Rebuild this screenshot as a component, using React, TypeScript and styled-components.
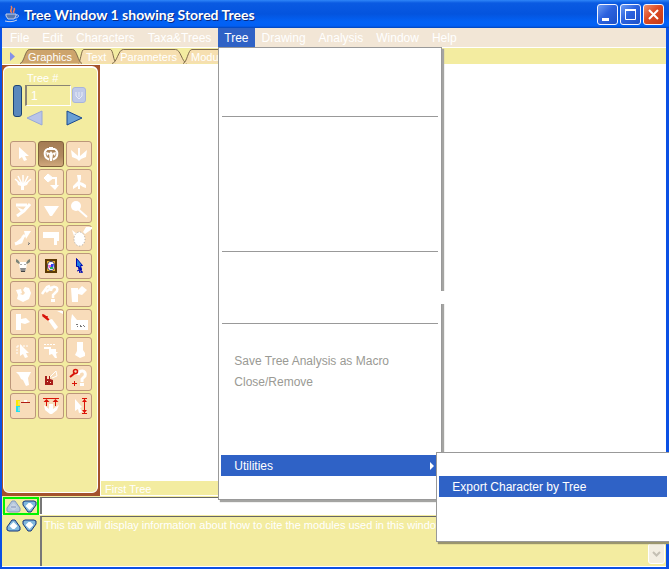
import React from "react";
import styled, { createGlobalStyle, css } from "styled-components";

const sand = "#f3eca0";
const select = "#2f62c6";

const Global = createGlobalStyle`
  * { box-sizing: border-box; }
  body { margin: 0; font: 12px/14px "Liberation Sans", Arial, sans-serif; overflow: hidden; }
  button, input { font: inherit; color: inherit; padding: 0; margin: 0; border: 0; background: none; border-radius: 0; }
  svg { display: block; }
`;

const Frame = styled.div`
  position: relative;
  display: flex;
  flex-direction: column;
  min-height: 100vh;
  overflow: hidden;
  background: #0a50e4;
  padding: 0 3px 2px 2px;
`;

const TitleBar = styled.header`
  display: flex;
  align-items: center;
  height: 28px;
  margin: 0 -3px 0 -2px;
  padding: 0 5px 0 4px;
  gap: 4px;
  background: linear-gradient(#2f86f8 0, #0a5ae2 3px, #0454de 14px, #0262f6 22px, #0260f4 26px, #0444b8 28px);
`;

const Title = styled.h1`
  flex: 1;
  margin: 0;
  padding-top: 2px;
  font: bold 14px/18px Lato, "Open Sans", sans-serif;
  color: #fff;
  text-shadow: 1px 1px 0 #0a2a80;
  white-space: nowrap;
`;

const WindowButtons = styled.div`
  display: flex;
  gap: 2px;
`;

const WindowButton = styled.button<{ $close?: boolean }>`
  width: 21px;
  height: 21px;
  border: 1px solid #f2f4ff;
  border-radius: 3px;
  background: ${(p) =>
    p.$close
      ? "linear-gradient(135deg, #f0906c, #dc4a24 45%, #c43a16)"
      : "linear-gradient(135deg, #6c9cf4, #2c62de 45%, #1c50c8)"};
`;

const MenuBar = styled.nav`
  display: flex;
  height: 20px;
  padding: 0 0 1px 2px;
  gap: 1px;
  color: #fff;
  background: #f2e6d6;
  border-bottom: 1px solid #fff;
`;

const MenuSlot = styled.div`
  position: relative;
`;

const MenuTitle = styled.button<{ $open?: boolean }>`
  height: 19px;
  padding: 0 6px;
  white-space: nowrap;
  ${(p) => p.$open && css`background: ${select};`}
`;

const panel = css`
  position: absolute;
  background: #fff;
  border: 1px solid #999;
  padding: 2px;
`;

const DropDown = styled.div`
  ${panel}
  z-index: 5;
  top: 19px;
  left: 0;
  width: 224px;
  box-shadow: 2px 2px 1px #a4a4a2;
  &::after {
    content: "";
    position: absolute;
    left: 100%;
    top: 243px;
    width: 4px;
    height: 13px;
    background: #fff;
  }
`;

const SubMenu = styled.div`
  ${panel}
  z-index: 6;
  top: -3px;
  left: calc(100% - 3px);
  width: 233px;
  border-right: 0;
  box-shadow: 2px 2px 1px #9a956e;
`;

const Blank = styled.div<{ $rows: number }>`
  height: ${(p) => p.$rows * 21}px;
`;

const Rule = styled.hr`
  height: 9px;
  margin: 0 1px;
  border: 0;
  background: linear-gradient(#999, #999) 0 3px / 100% 1px no-repeat;
`;

const ItemSlot = styled.div`
  position: relative;
`;

const Item = styled.button<{ $active?: boolean }>`
  display: flex;
  align-items: center;
  justify-content: space-between;
  width: 100%;
  height: 21px;
  padding: 0 5px 0 13px;
  white-space: nowrap;
  color: ${(p) => (p.$active ? "#fff" : "#9a9a94")};
  background: ${(p) => (p.$active ? select : "transparent")};
`;

const TabBar = styled.div`
  display: flex;
  height: 16px;
  padding-left: 8px;
  background: ${sand};
`;

const Expander = styled.button`
  width: 10px;
  height: 16px;
`;

const Tab = styled.button<{ $front?: boolean }>`
  position: relative;
  z-index: ${(p) => (p.$front ? 1 : 0)};
  height: 16px;
  margin-right: -4px;
  padding: 2px 10px 0 8px;
  font-size: 11px;
  line-height: 14px;
  color: #fff;
  white-space: nowrap;
  span { position: relative; }
`;

const TabShape = styled.svg`
  position: absolute;
  inset: 0;
  width: 100%;
  height: 100%;
`;

const Work = styled.main`
  display: flex;
  flex: 1;
  background: #fff;
`;

const ToolFrame = styled.aside`
  display: flex;
  width: 98px;
  margin-top: 1px;
  padding: 1px 2px 3px 1px;
  background: #a4522c;
`;

const ToolPanel = styled.div`
  flex: 1;
  padding: 4px 0 4px 6px;
  border: 1px solid #fff;
  border-top-width: 2px;
  border-radius: 6px;
  background: ${sand};
`;

const TreeLabel = styled.label`
  display: block;
  padding-left: 17px;
  font-size: 11px;
  line-height: 12px;
  color: #fff;
`;

const TreeChooser = styled.div`
  display: grid;
  grid-template-columns: 9px 46px 14px;
  column-gap: 3px;
  height: 57px;
  padding: 1px 0 0 3px;
`;

const SlideBar = styled.div`
  width: 9px;
  height: 32px;
  border: 1px solid #1c4474;
  border-radius: 3px;
  background: #5a88bc;
`;

const NumberBox = styled.input`
  width: 46px;
  height: 21px;
  padding-left: 4px;
  color: #fff;
  border: 1px solid #fff;
  border-top-color: #8a8474;
  border-left: 2px solid #8a8474;
`;

const Enter = styled.button`
  width: 14px;
  height: 16px;
  margin: 2px 0 0 -2px;
  border: 1px solid #a8b4dc;
  border-radius: 3px;
  background: #c0cae8;
`;

const Arrows = styled.div`
  display: flex;
  justify-content: space-between;
  width: 58px;
  margin-top: 4px;
  padding-left: 1px;
`;

const ChooserBody = styled.div`
  grid-column: 2 / 4;
`;

const ChooserRow = styled.div`
  display: flex;
  gap: 3px;
`;

const Tools = styled.div`
  display: grid;
  grid-template-columns: repeat(3, 26px);
  gap: 2px;
`;

const Tool = styled.button<{ $on?: boolean }>`
  width: 26px;
  height: 26px;
  border: 1px solid ${(p) => (p.$on ? "#80603c" : "#bc967a")};
  border-radius: 3px;
  background: ${(p) => (p.$on ? "linear-gradient(#a47c54, #b08a60 60%, #d0a87c)" : "#f8dcba")};
  svg { margin: -1px; }
`;

const Canvas = styled.section`
  display: flex;
  flex: 1;
  flex-direction: column;
  justify-content: flex-end;
  padding: 0 0 1px 1px;
`;

const TreeName = styled.div`
  height: 14px;
  padding: 1px 4px;
  font-size: 11px;
  line-height: 14px;
  color: #fff;
  background: ${sand};
`;

const InfoRow = styled.footer<{ $tall?: boolean }>`
  display: grid;
  grid-template-columns: 38px 1fr;
  height: ${(p) => (p.$tall ? 52 : 19)}px;
  border-bottom: 1px solid #fff;
  background: ${sand};
`;

const Pair = styled.div<{ $framed?: boolean }>`
  display: flex;
  align-items: center;
  gap: 1px;
  height: 18px;
  margin: 1px 1px 0;
  padding: 0 1px;
  border: 2px solid ${(p) => (p.$framed ? "#00f400" : "transparent")};
`;

const CommandBox = styled.input`
  width: 100%;
  height: 17px;
  background: #fff;
  border-left: 2px solid #777;
  border-top: 1px solid #666;
  margin-top: 1px;
`;

const Notes = styled.div`
  display: flex;
  justify-content: space-between;
  align-items: flex-end;
  margin-top: 1px;
  border-left: 2px solid #777;
  border-top: 1px solid #666;
  color: #fff;
  font-size: 11px;
  p { align-self: flex-start; margin: 1px 2px; white-space: nowrap; }
`;

const ScrollDown = styled.button`
  width: 17px;
  height: 21px;
  margin: 0 1px 2px 0;
  padding: 2px 1px;
  border: 1px solid #fff;
  border-radius: 3px;
  background: #f2eee2;
`;

const W = { fill: "none", stroke: "#fff", strokeWidth: 3 } as const;
const R = { fill: "none", stroke: "#d81408", strokeWidth: 1 } as const;

const tools: [string, React.ReactNode][] = [
  ["Arrow", <path d="M9 6v12l3-2 2 4 3-1-2-4h4z" fill="#fff" />],
  ["Reroot", <g><path d="M9 8a6 6 0 0 0 2 10.500M17 8a6 6 0 0 1-2 10.500M9 8h8" {...W} strokeWidth={2} /><path d="M8 11l4 1-3 3zM18 11l-4 1 3 3zM11 6h4v3h-4zM13 10l2 3-1 7h-2l-1-7z" fill="#fff" /></g>],
  ["Ladderize", <path d="M5 9l6 5 1 1V7h2v8l7-6-1 7-5 2-2 2-2-2-5-2z" fill="#fff" />],
  ["Collapse all", <g><path d="M5 10l7 6M8 7l4 8M13 6v10M18 7l-4 8M21 10l-7 6" {...W} strokeWidth={1.5} /><path d="M7 12l5 2h3l4-2-2 4-3 1v4h-3v-4l-3-1z" fill="#fff" /></g>],
  ["Move branch", <g><path d="M10 5l5 4-5 4-4-4z" fill="#fff" stroke="#fff" strokeLinejoin="round" /><path d="M12 9h6v8" {...W} strokeWidth={2} /><path d="M12 16h9l-4 5z" fill="#fff" /></g>],
  ["Prune", <path d="M11 6h4v4l-1 3 3 1 3 2v3l-3-1-3-2v4h-2v-3l-5 3v-3l5-5z" fill="#fff" />],
  ["Branch", <g><path d="M6 8h11M20 7l-6 7-7 5" {...W} strokeWidth={3} /><path d="M7 10l7 3-3 2z" fill="#fff" /></g>],
  ["Triangle", <path d="M6 9h15l-7 10h-2z" fill="#fff" />],
  ["Magnify", <g><circle cx="10" cy="9" r="5" fill="#fff" /><path d="M12 12l9 8" {...W} strokeWidth={2} /></g>],
  ["Stretch", <g><path d="M5 19l6-2 2-5 2-2" {...W} strokeWidth={3} /><path d="M14 6h7l-5 8zM5 18l6-5 1 4z" fill="#fff" /><path d="M18 20l2-2M18 18h1" stroke="#777" /></g>],
  ["Paint", <path d="M5 7h16v9h-2v4h-3v-7H5z" fill="#fff" />],
  ["Select region", <g><path d="M6 5l5 4-3 2zM20 2h6v2l-7 5-2-2z" fill="#fff" /><ellipse cx="13.5" cy="14" rx="5.5" ry="7" fill="#fff" stroke="#a9a9a9" strokeDasharray="1 2" /></g>],
  ["Bull", <g><path d="M9 9h8l-1 8h-6z" fill="#fff" /><path d="M6 6l2 1 2 3-1 1-3-2zM20 6l-2 1-2 3 1 1 3-2z" fill="#7c8478" /><path d="M11 11v1M15 11v1" stroke="#555" /><path d="M10 15h6l-1 4h-4z" fill="#8c8c8c" /><path d="M11 18h4v1h-4z" fill="#444" /></g>],
  ["Picture", <g><path d="M8 7h10v12H8z" fill="#e0a82c" stroke="#5c3a04" strokeWidth="2" /><ellipse cx="13" cy="13" rx="3.5" ry="4.500" fill="#fff" stroke="#446" /><path d="M10 12h3v3h-2z" fill="#f060c8" /><path d="M13 11h3l-1 4h-2z" fill="#3040f0" /><path d="M12 14h3v2h-3z" fill="#20b868" /></g>],
  ["Lightning", <g><path d="M10.500 5.500v8l2 0 2 4 1-1-1-4h2z" fill="#2080e0" stroke="#0008b0" /><path d="M12 13l2 7M14 14l2 6M11 18l5-2M13 19h4" stroke="#0008b0" /></g>],
  ["Rotate", <path d="M6 9l5-1 1 4-2 1 3 1 2-2-2-3 2-3 4 1 2 5-2 6-6 3-6-3 1-4z" fill="#fff" />],
  ["Ask", <g><path d="M4 13l5-7 3-1M8 11l6-5M13 10c0-6 8-5 6 0l-4 4v3" {...W} strokeWidth={2.5} /><path d="M13 18h4v3h-4z" fill="#fff" /></g>],
  ["Fold", <path d="M5 7h7v2l4-4 5 4-5 5-4-1v8H6z" fill="#fff" />],
  ["Root", <path d="M6 5h5v5l5-1 4 4-5 2-4-1v7H6z" fill="#fff" />],
  ["Brush", <g><path d="M10 11l4-1 6 8-3 3z" fill="#fff" /><path d="M19 2h6v3z" fill="#fff" /><path d="M5 5v2l5 4M6 6l5 5M9 7v3" {...R} strokeWidth={1.5} /></g>],
  ["Lengths", <g><path d="M6 5l5 6h11v10H5V11z" fill="#fff" /><path d="M10 15.500h2M14 16.500h1M17 16.500h1M11 17.500h1M14 17.500h2M18 17.500h1" stroke="#777" /></g>],
  ["Pick clade", <g><path d="M10 7v12l3-2 2 4 3-1-2-4h3z" fill="#fff" /><path d="M7 9h12M7 9v9" {...W} strokeWidth={1} strokeDasharray="2 1" /></g>],
  ["Pick branch", <g><path d="M6 10h7v2h5v3h2l-2 2 1 4h-2l-3-4-3 1v-6H6z" fill="#fff" /><path d="M6 7.500h12" {...W} strokeWidth={1} strokeDasharray="2 1" /></g>],
  ["Boot", <path d="M11 5h6v8l2 3v3l-5 2-5-3 2-4z" fill="#fff" />],
  ["Funnel", <path d="M6 7h15l-3 6 1 7-3 1-3-6-2-1-2-4z" fill="#fff" />],
  ["Fill", <g><path d="M7 11h2v3h2v-3h1v3l3 1v5H7z" fill="#a81c18" /><path d="M12 12l6-6 1 5-5 2" {...W} strokeWidth={1} /><path d="M9 16h1v1H9zM12 17h1v1h-1z" fill="#f8dcba" /></g>],
  ["Probe", <g><path d="M12 10c1-6 9-5 7 1l-3 3v3" {...W} /><path d="M14 18h4v3h-4z" fill="#fff" /><path d="M4 12l5-4" {...R} strokeWidth={2} /><path d="M6 18.500h5M8.500 16v5" {...R} /><circle cx="9.5" cy="6.5" r="2" {...R} strokeWidth={1.5} /></g>],
  ["Scale", <g><path d="M6 7h4v6H6z" fill="#f8e800" /><path d="M6 13h4v6H6z" fill="#20e0f0" /><path d="M8 9h2M8 11h2M8 15h2M8 17h2" stroke="#f8dcba" /><path d="M11 9.500h9" {...R} stroke="#b01c14" /><path d="M14 7h3v2h-3z" fill="#fff" /></g>],
  ["Align up", <g><path d="M6 12l5 4v-5h4v5l6-4-2 5-5 4h-2l-5-4z" fill="#fff" /><path d="M5 5.500h16M8.500 7v6M17.500 7v6" {...R} strokeWidth={1} /><path d="M8.500 6l3 3h-6zM17.500 6l3 3h-6z" fill="#d81408" /></g>],
  ["Resize", <g><path d="M9 6v12l3-2 1 4 3-1-2-4 2-1z" fill="#fff" /><path d="M16 5.500h5M16 20.500h5M18.500 6v14" {...R} strokeWidth={1} /><path d="M16 9l2.500-3L21 9zM16 17l2.500 3 2.500-3z" fill="#e01008" /></g>],
];

const Diamond = ({ down, faded }: { down?: boolean; faded?: boolean }) => (
  <svg width="15" height="13" viewBox="0 0 15 13">
    <g transform={down ? "rotate(180 7.5 6.5)" : undefined}>
      <path d="M6 1h3l5 7v3l-2 1H3l-2-1V8z" fill={faded ? "#b4c8dc" : "#80b8dc"} stroke={faded ? "#8498bc" : "#14347c"} />
      <path d="M7.500 3l4 4-3 3h-2l-3-3z" fill={faded ? "#c8d4e4" : "#fff"} />
      {faded && <path d="M5 7h5" stroke="#8094b8" />}
    </g>
  </svg>
);

const Triangle = ({ left }: { left?: boolean }) => (
  <svg width="17" height="16" viewBox="0 0 17 16">
    <path
      d={left ? "M16 1v14L1 8z" : "M1 1v14l15-7z"}
      fill={left ? "#b8c4e8" : "#6aa0d4"}
      stroke={left ? "#98a8d8" : "#184890"}
      strokeLinejoin="round"
    />
  </svg>
);

const TabButton = ({ label, front }: { label: string; front?: boolean }) => (
  <Tab role="tab" aria-selected={!!front} $front={front}>
    <TabShape viewBox="0 0 60 16" preserveAspectRatio="none" aria-hidden="true">
      <path
        d="M0 15.500C4 15 5 1.500 9 1.500H51C55 1.500 56 14 60 15.500"
        fill={front ? "#cda46c" : "#f6dfb0"}
        stroke="#806c4c"
        vectorEffect="non-scaling-stroke"
      />
    </TabShape>
    <span>{label}</span>
  </Tab>
);

const JavaCup = () => (
  <svg width="16" height="18" viewBox="0 0 16 18" aria-hidden="true">
    <path d="M8 8C4 5 10 4 7 1M10 8c-2-2 2-3 0-5" fill="none" stroke="#f08058" strokeWidth="1.5" />
    <path d="M2 9h10v2l-2 3H4l-2-3z" fill="#5878b0" stroke="#c4d0ec" />
    <path d="M12 10c4-1 3 3-1 3M1 16c4 1 8 1 12-1" fill="none" stroke="#c4d0ec" />
  </svg>
);

const TreeMenu = () => (
  <DropDown role="menu" aria-label="Tree">
    <Blank $rows={3} />
    <Rule />
    <Blank $rows={6} />
    <Rule />
    <Blank $rows={3} />
    <Rule />
    <Blank $rows={1} />
    <Item role="menuitem">Save Tree Analysis as Macro</Item>
    <Item role="menuitem">Close/Remove</Item>
    <Blank $rows={3} />
    <ItemSlot>
      <Item role="menuitem" aria-haspopup="menu" aria-expanded="true" $active>
        Utilities
        <svg width="4" height="8" viewBox="0 0 4 8"><path d="M0 0l4 4-4 4z" fill="#fff" /></svg>
      </Item>
      <SubMenu role="menu" aria-label="Utilities">
        <Blank $rows={1} />
        <Item role="menuitem" $active>Export Character by Tree</Item>
        <Blank $rows={2} />
      </SubMenu>
    </ItemSlot>
    <Blank $rows={1} />
  </DropDown>
);

const menus = ["File", "Edit", "Characters", "Taxa&Trees", "Tree", "Drawing", "Analysis", "Window", "Help"];

export default function App() {
  return (
    <>
      <Global />
      <Frame>
        <TitleBar>
          <JavaCup />
          <Title>Tree Window 1 showing Stored Trees</Title>
          <WindowButtons>
            <WindowButton aria-label="Minimize">
              <svg width="19" height="19"><path d="M4 13h7v3H4z" fill="#fff" /></svg>
            </WindowButton>
            <WindowButton aria-label="Maximize">
              <svg width="19" height="19"><path d="M4.500 5.500h10v9h-10z" fill="none" stroke="#fff" /><path d="M4 4h11v2H4z" fill="#fff" /></svg>
            </WindowButton>
            <WindowButton aria-label="Close" $close>
              <svg width="19" height="19"><path d="M5 5l9 9M14 5l-9 9" stroke="#fff" strokeWidth="2" /></svg>
            </WindowButton>
          </WindowButtons>
        </TitleBar>
        <MenuBar>
          {menus.map((m) => (
            <MenuSlot key={m}>
              <MenuTitle $open={m === "Tree"} aria-haspopup="menu">{m}</MenuTitle>
              {m === "Tree" && <TreeMenu />}
            </MenuSlot>
          ))}
        </MenuBar>
        <TabBar role="tablist">
          <Expander aria-label="Expand">
            <svg width="6" height="9" viewBox="0 0 6 9"><path d="M0 0l5 4.500L0 9z" fill="#8490e8" /></svg>
          </Expander>
          <TabButton label="Graphics" front />
          <TabButton label="Text" />
          <TabButton label="Parameters" />
          <TabButton label="Modules" />
        </TabBar>
        <Work>
          <ToolFrame>
            <ToolPanel>
              <TreeLabel htmlFor="tree-number">Tree #</TreeLabel>
              <TreeChooser>
                <SlideBar />
                <ChooserBody>
                  <ChooserRow>
                    <NumberBox id="tree-number" defaultValue="1" />
                    <Enter aria-label="Go to tree">
                      <svg width="12" height="14"><path d="M3 4v4l3 3 3-3V4M6 4v5" fill="none" stroke="#e8ecf8" /></svg>
                    </Enter>
                  </ChooserRow>
                  <Arrows>
                    <button aria-label="Previous tree"><Triangle left /></button>
                    <button aria-label="Next tree"><Triangle /></button>
                  </Arrows>
                </ChooserBody>
              </TreeChooser>
              <Tools>
                {tools.map(([name, art], i) => (
                  <Tool key={name} aria-label={name} $on={i === 1}>
                    <svg width="26" height="26" viewBox="0 0 26 26">{art}</svg>
                  </Tool>
                ))}
              </Tools>
            </ToolPanel>
          </ToolFrame>
          <Canvas>
            <TreeName>First Tree</TreeName>
          </Canvas>
        </Work>
        <InfoRow>
          <Pair $framed>
            <button aria-label="Shrink command line"><Diamond faded /></button>
            <button aria-label="Grow command line"><Diamond down /></button>
          </Pair>
          <CommandBox aria-label="Command" />
        </InfoRow>
        <InfoRow $tall>
          <Pair>
            <button aria-label="Raise notes"><Diamond /></button>
            <button aria-label="Lower notes"><Diamond down /></button>
          </Pair>
          <Notes>
            <p>This tab will display information about how to cite the modules used in this window</p>
            <ScrollDown aria-label="Scroll down">
              <svg width="13" height="15"><path d="M3 6l3.500 3.500L10 6" fill="none" stroke="#c4c0b4" strokeWidth="2" /></svg>
            </ScrollDown>
          </Notes>
        </InfoRow>
      </Frame>
    </>
  );
}
